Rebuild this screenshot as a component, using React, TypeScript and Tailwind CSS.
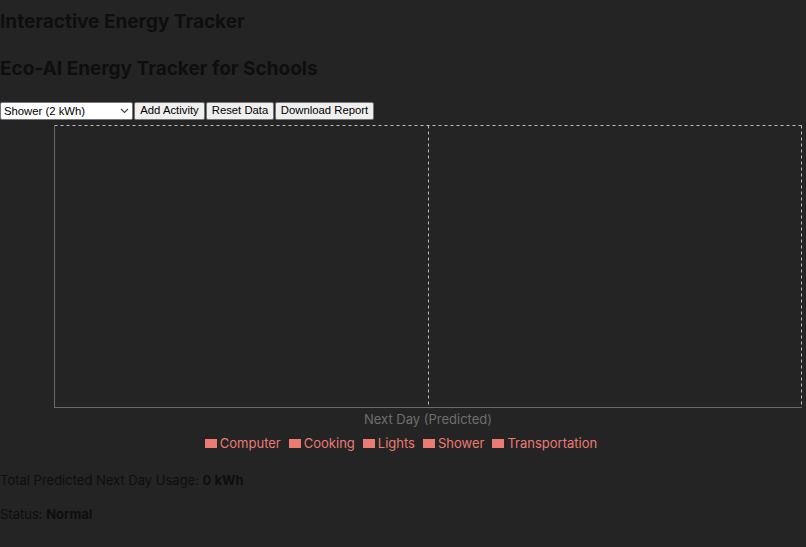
import React from "react";

const legend = ["Computer", "Cooking", "Lights", "Shower", "Transportation"];

export default function App() {
  return (
    <div className="min-h-[547px] w-[806px] bg-[#242424] text-[#0e0e0e] font-['Inter',sans-serif] overflow-hidden">
      <h1 className="pt-[11px] text-[19px] leading-[22px] font-bold">Interactive Energy Tracker</h1>
      <h2 className="mt-[25px] text-[19px] leading-[22px] font-bold">Eco-AI Energy Tracker for Schools</h2>
      <div className="mt-[22px] flex items-center h-[18px] font-['Liberation_Sans',Arial,sans-serif] text-[11.3px]">
        <div className="w-[133px] h-[18px] bg-white border border-[#767676] rounded-[2px] flex items-center justify-between pl-[3px] pr-[3px] text-black">
          <span>Shower (2 kWh)</span>
          <svg width="9" height="6" viewBox="0 0 9 6"><path d="M1 1l3.5 3.5L8 1" fill="none" stroke="#444" strokeWidth="1.1" /></svg>
        </div>
        <button className="ml-[1px] h-[18px] w-[71px] bg-[#efefef] border border-[#767676] rounded-[2px] text-black leading-none whitespace-nowrap">Add Activity</button>
        <button className="ml-[1px] h-[18px] w-[68px] bg-[#efefef] border border-[#767676] rounded-[2px] text-black leading-none whitespace-nowrap">Reset Data</button>
        <button className="ml-[1px] h-[18px] w-[99px] bg-[#efefef] border border-[#767676] rounded-[2px] text-black leading-none whitespace-nowrap">Download Report</button>
      </div>
      <svg width="806" height="340" className="block -mt-[1px]">
        <line x1="54.5" y1="6.5" x2="801.5" y2="6.5" stroke="#bdbdbd" strokeDasharray="3 3" />
        <line x1="428.5" y1="6.5" x2="428.5" y2="288" stroke="#bdbdbd" strokeDasharray="3 3" />
        <line x1="801.5" y1="6.5" x2="801.5" y2="288" stroke="#bdbdbd" strokeDasharray="3 3" />
        <line x1="54.5" y1="6" x2="54.5" y2="288.5" stroke="#6b6b6b" />
        <line x1="54" y1="288.5" x2="802" y2="288.5" stroke="#6b6b6b" />
        <text x="428" y="305" textAnchor="middle" fill="#6e6e6e" fontSize="13" fontFamily="Inter, sans-serif">Next Day (Predicted)</text>
      </svg>
      <div className="-mt-[25px] flex justify-center gap-[8px] text-[13px] leading-[18px] text-[#ec7b73] pr-[4px]">
        {legend.map((l) => (
          <div key={l} className="flex items-center gap-[3px]">
            <span className="w-[12px] h-[9px] bg-[#ec7b73] inline-block" />
            <span>{l}</span>
          </div>
        ))}
      </div>
      <p className="mt-[20px] text-[13px] leading-[16px]">Total Predicted Next Day Usage: <b>0 kWh</b></p>
      <p className="mt-[18px] text-[13px] leading-[16px]">Status: <b>Normal</b></p>
    </div>
  );
}
